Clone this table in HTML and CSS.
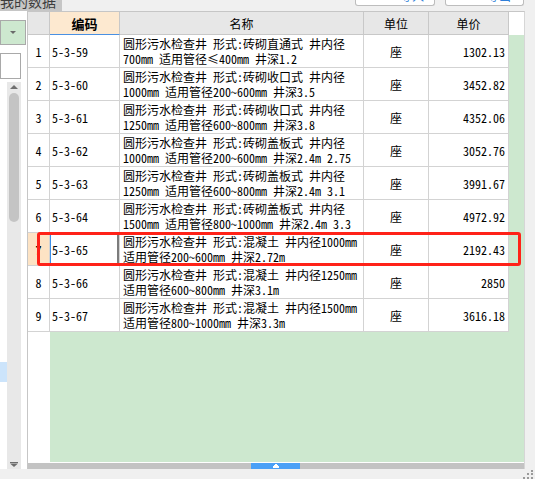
FILE: index.html
```html
<!DOCTYPE html>
<html lang="zh-CN">
<head>
<meta charset="utf-8">
<title>定额数据</title>
<link rel="stylesheet" href="styles.css">
</head>
<body>
<div class="app">
  <div class="topbar">
    <div class="tab"><span>我的数据</span></div>
    <div class="topbtn b1"><span>导入</span></div>
    <div class="topbtn b2"><span>导出</span></div>
  </div>
  <div class="main">
    <div class="side">
      <div class="combo"><i class="caret"></i></div>
      <div class="input"></div>
      <div class="sidelist">
        <div class="selcol"><div class="sel"></div></div>
        <div class="vscroll">
          <i class="up"></i>
          <div class="thumb"></div>
          <div class="vspace"></div>
          <svg class="down" width="8" height="5" viewBox="0 0 8 5"><rect x="0" y="0" width="8" height="1" fill="#6c6c6c"/><path d="M0 1.5H8L4 5Z" fill="#6c6c6c"/></svg>
        </div>
      </div>
    </div>
    <div class="gridpanel">
      <div class="table">
        <div class="row head">
          <div class="c hnum"></div>
          <div class="c hcode">编码</div>
          <div class="c">名称</div>
          <div class="c">单位</div>
          <div class="c">单价</div>
          <div class="c hfill"></div>
        </div>
        <div class="row">
          <div class="c num">1</div><div class="c code">5-3-59</div>
          <div class="c name"><span>圆形污水检查井 形式:砖砌直通式 井内径</span><span>700mm 适用管径≤400mm 井深1.2</span></div>
          <div class="c unit">座</div><div class="c price">1302.13</div><div class="c fill"></div>
        </div>
        <div class="row">
          <div class="c num">2</div><div class="c code">5-3-60</div>
          <div class="c name"><span>圆形污水检查井 形式:砖砌收口式 井内径</span><span>1000mm 适用管径200~600mm 井深3.5</span></div>
          <div class="c unit">座</div><div class="c price">3452.82</div><div class="c fill"></div>
        </div>
        <div class="row">
          <div class="c num">3</div><div class="c code">5-3-61</div>
          <div class="c name"><span>圆形污水检查井 形式:砖砌收口式 井内径</span><span>1250mm 适用管径600~800mm 井深3.8</span></div>
          <div class="c unit">座</div><div class="c price">4352.06</div><div class="c fill"></div>
        </div>
        <div class="row">
          <div class="c num">4</div><div class="c code">5-3-62</div>
          <div class="c name"><span>圆形污水检查井 形式:砖砌盖板式 井内径</span><span>1000mm 适用管径200~600mm 井深2.4m 2.75</span></div>
          <div class="c unit">座</div><div class="c price">3052.76</div><div class="c fill"></div>
        </div>
        <div class="row">
          <div class="c num">5</div><div class="c code">5-3-63</div>
          <div class="c name"><span>圆形污水检查井 形式:砖砌盖板式 井内径</span><span>1250mm 适用管径600~800mm 井深2.4m 3.1</span></div>
          <div class="c unit">座</div><div class="c price">3991.67</div><div class="c fill"></div>
        </div>
        <div class="row">
          <div class="c num">6</div><div class="c code">5-3-64</div>
          <div class="c name"><span>圆形污水检查井 形式:砖砌盖板式 井内径</span><span>1500mm 适用管径800~1000mm 井深2.4m 3.3</span></div>
          <div class="c unit">座</div><div class="c price">4972.92</div><div class="c fill"></div>
        </div>
        <div class="row active">
          <div class="c num">7</div><div class="c code">5-3-65</div>
          <div class="c name"><span>圆形污水检查井 形式:混凝土 井内径1000mm</span><span>适用管径200~600mm 井深2.72m</span></div>
          <div class="c unit">座</div><div class="c price">2192.43</div><div class="c fill"></div>
        </div>
        <div class="row">
          <div class="c num">8</div><div class="c code">5-3-66</div>
          <div class="c name"><span>圆形污水检查井 形式:混凝土 井内径1250mm</span><span>适用管径600~800mm 井深3.1m</span></div>
          <div class="c unit">座</div><div class="c price">2850</div><div class="c fill"></div>
        </div>
        <div class="row">
          <div class="c num">9</div><div class="c code">5-3-67</div>
          <div class="c name"><span>圆形污水检查井 形式:混凝土 井内径1500mm</span><span>适用管径800~1000mm 井深3.3m</span></div>
          <div class="c unit">座</div><div class="c price">3616.18</div><div class="c fill"></div>
        </div>
        <div class="rest"><div class="restnum"></div><div class="restfill"></div></div>
      </div>
      <div class="hgap"></div>
      <div class="hscroll">
        <div class="hthumb"><svg width="6" height="4" viewBox="0 0 6 4"><path d="M2 0H4V1H5V2H6V4H0V2H1V1H2Z" fill="#fff"/></svg></div>
      </div>
    </div>
    <div class="rightstrip"></div>
  </div>
  <div class="bottombar">
    <svg class="grip" width="11" height="9" viewBox="0 0 11 9"><g fill="#9a9a9a"><rect x="8" y="0" width="2" height="2"/><rect x="4" y="3" width="2" height="2"/><rect x="8" y="3" width="2" height="2"/><rect x="0" y="7" width="2" height="2"/><rect x="4" y="7" width="2" height="2"/><rect x="8" y="7" width="2" height="2"/></g></svg>
  </div>
</div>
<div class="mark"></div>
</body>
</html>
```
FILE: styles.css
```css
* { box-sizing: border-box; margin: 0; padding: 0; }
html, body { width: 535px; height: 479px; overflow: hidden; }
body {
  background: #f0f0f0;
  font-family: "Noto Sans Mono CJK SC", "Noto Sans CJK SC", monospace;
  font-size: 12px;
  color: #000;
  position: relative;
}
.app { display: flex; flex-direction: column; height: 479px; }

/* top strip */
.topbar { height: 11px; display: flex; align-items: flex-start; background: #f0f0f0; }
.tab { width: 62px; height: 11px; background: #c6c6c6; overflow: hidden; color: #3c3c3c; font-size: 14px; line-height: 14px; }
.tab span { display: block; margin-top: -6px; white-space: nowrap; }
.topbtn { height: 6px; background: #fff; border: 1px solid #bdbdbd; border-top: 0; border-radius: 0 0 3px 3px; overflow: hidden; color: #2f7fd8; }
.b1 { margin-left: 293px; width: 80px; }
.b2 { margin-left: 10px; width: 79px; }
.topbtn span { display: block; font-size: 12px; line-height: 12px; margin-top: -10px; white-space: nowrap; }
.b1 span { padding-left: 44px; }
.b2 span { padding-left: 41px; }

/* main */
.main { height: 458px; display: flex; }
.side { width: 27px; background: #fff; display: flex; flex-direction: column; }
.combo { margin-top: 9px; width: 26px; height: 25px; background: #cde8cf; border: 1px solid #a9a9a9; padding: 10px 0 0 9px; }
.caret { display: block; width: 0; height: 0; border-left: 3px solid transparent; border-right: 3px solid transparent; border-top: 3px solid #6a6a6a; }
.input { margin-top: 8px; width: 21px; height: 26px; border: 1px solid #a9a9a9; background: #fff; }
.sidelist { margin-top: 3px; flex: 1; display: flex; }
.selcol { width: 7px; }
.sel { margin-top: 280px; height: 20px; background: #cce4fb; }
.vscroll { width: 14px; background: #e8e8e8; display: flex; flex-direction: column; align-items: center; }
.up { display: block; margin-top: 3px; width: 0; height: 0; border-left: 4px solid transparent; border-right: 4px solid transparent; border-bottom: 4px solid #707070; }
.thumb { margin-top: 4px; width: 10px; height: 129px; background: #c4c4c4; border-radius: 5px; }
.vspace { flex: 1; }
.down { display: block; margin-bottom: 2px; }

/* grid */
.gridpanel { width: 498px; border-left: 1px solid #c6c6c6; border-top: 1px solid #c6c6c6; border-right: 1px solid #d6d6d6; background: #fff; display: flex; flex-direction: column; }
.table { flex: 1; display: flex; flex-direction: column; }
.row { display: grid; grid-template-columns: 22px 70px 244px 65px 80px 15px; height: 33px; }
.c { border-right: 1px solid #d3d3d3; border-bottom: 1px solid #d3d3d3; background: #fff; display: flex; align-items: center; white-space: nowrap; overflow: hidden; }
.head { height: 23px; }
.head .c { background: #e7e7e7; border-color: #c8c8c8; justify-content: center; }
.head .hcode { background: #fde9d0; border-bottom: 1px solid #4a90e2; font-weight: bold; font-size: 13px; }
.head .hfill { background: #fff; border: 0; }
.num { justify-content: center; }
.code { padding-left: 2px; }
.name { padding-left: 3px; flex-direction: column; align-items: flex-start; justify-content: center; }
.name span { display: block; height: 15px; line-height: 15px; }
.unit { justify-content: center; }
.price { justify-content: flex-end; padding-right: 3px; }
.fill { background: #cde8cf; border: 0; }
.active .num { background: #fde3c4; font-weight: bold; }
.active .code { box-shadow: inset 1px 0 #3d8fe8, inset -2px 0 #7c7c7c, inset 0 2px #7c7c7c, inset 0 -1px #7c7c7c; }
.rest { flex: 1; display: grid; grid-template-columns: 22px 1fr; }
.restnum { background: #fff; }
.restfill { background: #cde8cf; }
.hgap { height: 1px; background: #fff; }
.hscroll { height: 6px; background: #c3c3c3; display: flex; }
.hthumb { margin-left: 223px; width: 49px; background: #4aa0f6; display: flex; align-items: center; justify-content: center; }
.hthumb svg { display: block; }
.rightstrip { flex: 1; background: #f0f0f0; }

/* bottom */
.bottombar { height: 10px; background: #f0f0f0; display: flex; justify-content: flex-end; align-items: flex-end; padding-right: 1px; }
.grip { display: block; }

/* annotation */
.mark { position: absolute; left: 37px; top: 232px; width: 484px; height: 34px; border: 3px solid #ff2218; border-radius: 3px; }
```
